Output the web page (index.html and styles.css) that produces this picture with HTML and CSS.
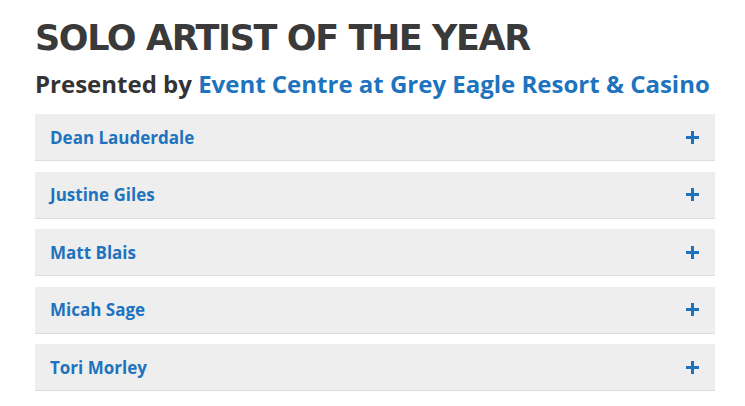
FILE: index.html
```html
<!DOCTYPE html>
<html>
<head>
<meta charset="utf-8">
<link rel="stylesheet" href="styles.css">
</head>
<body>
<main class="award">
  <h1 class="award-title">SOLO ARTIST OF THE YEAR</h1>
  <h2 class="award-sponsor">Presented by <a href="#" class="sponsor-link">Event Centre at Grey Eagle Resort &amp; Casino</a></h2>
  <ul class="nominees">
    <li class="nominee"><span class="nominee-name">Dean Lauderdale</span><span class="plus"></span></li>
    <li class="nominee"><span class="nominee-name">Justine Giles</span><span class="plus"></span></li>
    <li class="nominee"><span class="nominee-name">Matt Blais</span><span class="plus"></span></li>
    <li class="nominee"><span class="nominee-name">Micah Sage</span><span class="plus"></span></li>
    <li class="nominee"><span class="nominee-name">Tori Morley</span><span class="plus"></span></li>
  </ul>
</main>
</body>
</html>
```
FILE: styles.css
```css
html, body {
  margin: 0;
  padding: 0;
  background: #ffffff;
}
.award {
  padding: 15px 30px 0 35px;
  font-family: "Open Sans", "Liberation Sans", sans-serif;
}
.award-title {
  margin: 0;
  font-family: "DejaVu Sans", sans-serif;
  font-weight: 700;
  font-size: 35px;
  line-height: 46px;
  color: #3a3a3a;
  letter-spacing: -1.4px;
}
.award-sponsor {
  margin: 8px 0 15px 0;
  font-weight: 700;
  font-size: 24px;
  line-height: 30px;
  color: #333333;
}
.sponsor-link {
  color: #1e73be;
  text-decoration: none;
}
.nominees {
  list-style: none;
  margin: 0;
  padding: 0;
  width: 680px;
}
.nominee {
  display: flex;
  align-items: center;
  justify-content: space-between;
  height: 46px;
  padding: 0 16px 0 15px;
  background: #eeeeee;
  border-bottom: 1px solid #dddddd;
  margin-bottom: 10.5px;
}
.nominee-name {
  font-weight: 700;
  font-size: 17px;
  color: #1e73be;
}
.plus {
  position: relative;
  width: 13px;
  height: 13px;
}
.plus::before, .plus::after {
  content: "";
  position: absolute;
  background: #1e73be;
}
.plus::before {
  left: 0;
  top: 5px;
  width: 13px;
  height: 3px;
}
.plus::after {
  left: 5px;
  top: 0;
  width: 3px;
  height: 13px;
}
```
